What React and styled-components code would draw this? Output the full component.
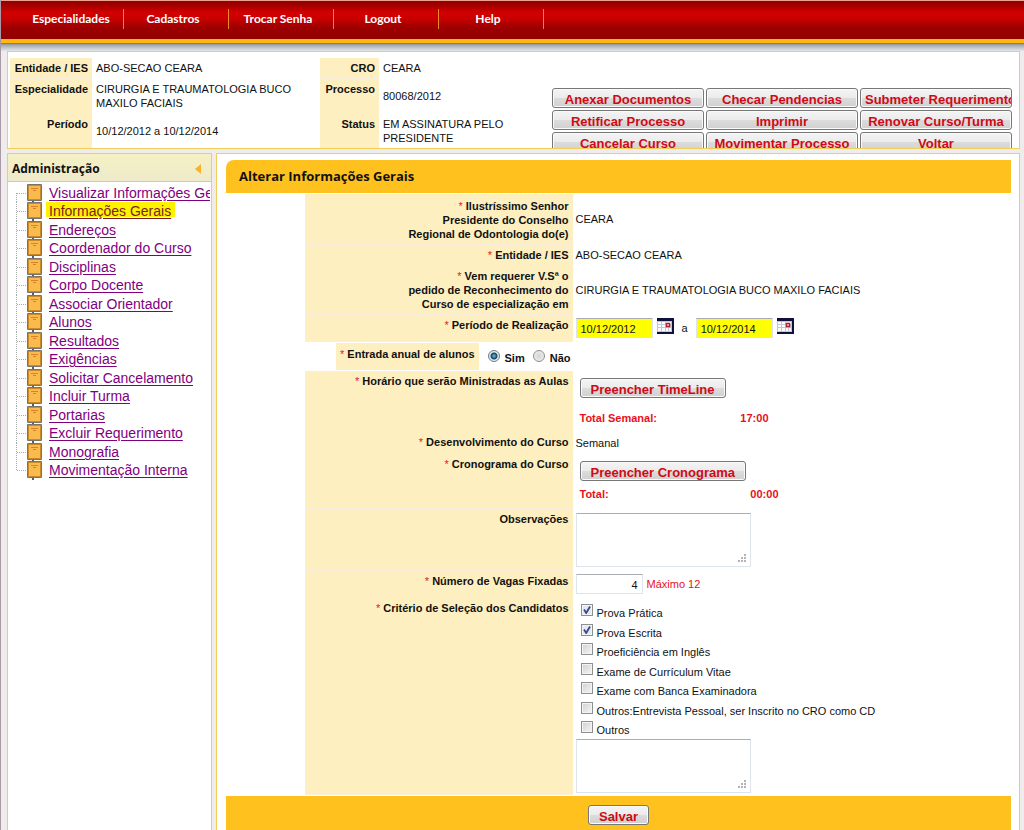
import React, { useState } from "react"
import styled, { createGlobalStyle, css } from "styled-components"

const GlobalStyle = createGlobalStyle`
  * {
    box-sizing: border-box;
  }
  body {
    margin: 0;
    background: #f0ecec;
    color: #111;
    font: 11px/14px "Liberation Sans", Arial, sans-serif;
    overflow: hidden;
  }
`

const SPage = styled.div`
  display: flex;
  flex-direction: column;
  height: 100vh;
  border-left: 1px solid #a99aa8;
`

const STopBar = styled.nav`
  flex: none;
  height: 51px;
  border-top: 1px solid #f0a090;
  background: linear-gradient(
    #8c0000 0,
    #d40000 12px,
    #c80000 18px,
    #9c0000 27px,
    #940000 38px,
    #fdb813 38px,
    #fdb813 42px,
    #77716f 42px,
    #a5a8ae 44px,
    #e4e6ea 50px
  );
`

const SMenu = styled.ul`
  display: flex;
  margin: 0;
  padding: 8px 0 0 18px;
  list-style: none;
`

const SMenuItem = styled.li`
  width: 105px;
  padding-right: 6px;
  border-right: 1px solid #f08a1c;
  &:first-child {
    padding-right: 0;
  }
  a {
    display: block;
    color: #fff;
    font: bold 12px/20px Lato, "Trebuchet MS", sans-serif;
    text-align: center;
    text-decoration: none;
  }
`

const panel = css`
  border: 1px solid #f0cf5a;
  background: #fff;
`

const SSummary = styled.section`
  ${panel}
  display: flex;
  justify-content: space-between;
  flex: none;
  height: 98px;
  margin: 0 4px 4px 6px;
  padding: 6px 7px 0 2px;
  overflow: hidden;
`

const SInfoTable = styled.table`
  flex: none;
  width: 540px;
  height: 91px;
  border-collapse: collapse;
  table-layout: fixed;
  th,
  td {
    padding: 3px 4px;
    text-align: left;
  }
  th {
    border-bottom: 1px solid #fbeedb;
    background: #feefc0;
    text-align: right;
    vertical-align: top;
    white-space: nowrap;
  }
`

const SActions = styled.div`
  display: grid;
  grid-template-columns: repeat(3, 152px);
  gap: 2px;
  align-content: start;
  padding-top: 30px;
`

const SButton = styled.button`
  height: 20px;
  padding: 0 ${p => (p.$wide ? "10px" : "4px")};
  overflow: hidden;
  border: 1px solid #777;
  border-radius: 3px;
  background: linear-gradient(#f4f4f4, #ebebeb 50%, #dcdcdc 52%, #d0d0d0);
  box-shadow: inset 0 0 0 1px #fafafa;
  color: #d00a14;
  font: bold 13px/22px "Liberation Sans", Arial, sans-serif;
  white-space: nowrap;
  cursor: pointer;
`

const SBody = styled.div`
  display: flex;
  flex: 1;
  gap: 4px;
  min-height: 0;
  margin: 0 4px 0 6px;
`

const SSidebar = styled.aside`
  ${panel}
  flex: none;
  width: 205px;
  border-bottom: 0;
  overflow: hidden;
`

const SSidebarTitle = styled.header`
  display: flex;
  align-items: center;
  justify-content: space-between;
  height: 28px;
  padding: 2px 9px 0 4px;
  border-bottom: 1px solid #f5c860;
  background: linear-gradient(#f5f1c4, #eeeacb);
  h2 {
    margin: 0;
    font: bold 12px/20px "Open Sans", Tahoma, sans-serif;
  }
  button {
    display: flex;
    padding: 0;
    border: 0;
    background: none;
  }
`

const STree = styled.ul`
  margin: 0 1px 0 0;
  padding: 2px 0 4px 8px;
  overflow: hidden;
  list-style: none;
`

const STreeItem = styled.li`
  display: flex;
  height: 18px;
  &:nth-child(even) {
    height: 19px;
  }
  svg {
    flex: none;
    overflow: visible;
  }
  a {
    margin-left: 3px;
    padding: 0 4px 0 3px;
    color: #800080;
    font-size: 14px;
    line-height: 18px;
    text-underline-offset: 2px;
    white-space: nowrap;
    ${p =>
      p.$active &&
      css`
        background: linear-gradient(#fff200 15px, transparent 15px);
        color: #7d1c1c;
      `}
  }
`

const SMain = styled.main`
  ${panel}
  flex: 1;
  display: flex;
  flex-direction: column;
  min-width: 0;
  padding: 6px 8px 0 9px;
  border-bottom: 0;
  overflow: hidden;
`

const STitle = styled.h1`
  flex: none;
  margin: 0;
  padding: 0 13px;
  border-radius: 8px 0 0 0;
  background: #ffc11e;
  font: bold 13px/33px "Open Sans", Tahoma, sans-serif;
`

const SForm = styled.form`
  display: flex;
  flex-direction: column;
  flex: 1;
`

const SFormTable = styled.table`
  width: 90%;
  margin: 1px 0 1px auto;
  border-collapse: collapse;
  table-layout: fixed;
`

const SRow = styled.tr`
  height: ${p => p.$height}px;
`

const SLabelCell = styled.th`
  width: 268px;
  padding: 3px 4px;
  border-bottom: 1px solid #fbeddd;
  background: #feefc0;
  text-align: right;
  vertical-align: top;
  tr:first-child > & {
    padding-top: 5px;
  }
`

const SValueCell = styled.td`
  padding: 0 3px;
  vertical-align: ${p => p.$align || "middle"};
`

const SRequired = styled.span`
  color: #e02020;
  font-weight: normal;
`

const SSplitCell = styled.td`
  padding: 0;
  fieldset {
    display: flex;
    justify-content: flex-end;
    margin: 0;
    padding: 0;
    border: 0;
    font-weight: bold;
  }
`

const SSplitLabel = styled.span`
  height: 27px;
  padding: 4px;
  background: #feefc0;
`

const SRadios = styled.span`
  display: flex;
  align-items: center;
  gap: 5px;
  width: 94px;
  padding: 0 2px 0 9px;
  label {
    padding-top: 4px;
  }
  label + input {
    margin-left: 3px;
  }
`

const SRadio = styled.input.attrs({ type: "radio" })`
  appearance: none;
  flex: none;
  width: 12px;
  height: 12px;
  margin: 0;
  border: 1px solid #8e8f8f;
  border-radius: 50%;
  background: radial-gradient(#d4d4d4, #f4f4f4);
  &:checked {
    border-color: #6a7a88;
    background: radial-gradient(#63c5e8 0, #16425f 3px, #e8eef2 4px);
  }
`

const SInline = styled.div`
  display: flex;
  align-items: center;
`

const STextInput = styled.input`
  width: ${p => p.$width}px;
  height: 20px;
  padding: 2px 4px 0;
  border: 1px solid #dde4ee;
  border-top-color: #abadb3;
  background: ${p => (p.$marked ? "#ffff00" : "#fff")};
  color: #111;
  font: inherit;
  text-align: ${p => (p.$marked ? "left" : "right")};
`

const SIconButton = styled.button`
  display: flex;
  margin: 0 3px 4px 4px;
  padding: 0;
  border: 0;
  background: none;
`

const SUntil = styled.span`
  margin: 0 8px 0 5px;
`

const SStack = styled.div`
  display: flex;
  flex-direction: column;
  align-items: flex-start;
  gap: ${p => p.$gap}px;
  padding: 7px 4px 0;
`

const STotal = styled.div`
  display: flex;
  justify-content: space-between;
  width: ${p => p.$width}px;
  color: #e8101c;
  font-weight: bold;
`

const STextArea = styled.textarea`
  display: block;
  width: 175px;
  height: 54px;
  border: 1px solid #dde4ee;
  border-top-color: #abadb3;
  background: #fff;
  font: inherit;
  resize: both;
  &::-webkit-resizer {
    background: url("data:image/svg+xml,%3Csvg xmlns='http://www.w3.org/2000/svg' width='15' height='15' fill='%23b4b4b4'%3E%3Cpath d='M9 3h2v2H9zM9 6h2v2H9zM9 9h2v2H9zM6 6h2v2H6zM6 9h2v2H6zM3 9h2v2H3z'/%3E%3C/svg%3E")
      no-repeat;
  }
`

const SHint = styled.span`
  margin-left: 4px;
  color: #e8101c;
`

const SCriteria = styled.ul`
  margin: 0;
  padding: 6px 5px 0;
  list-style: none;
`

const SCriterion = styled.li`
  display: flex;
  gap: 4px;
  height: 20px;
  &:nth-child(even) {
    height: 19px;
  }
  &:last-child {
    height: 18px;
  }
  label {
    padding-top: 2px;
  }
`

const SCheckbox = styled.input.attrs({ type: "checkbox" })`
  appearance: none;
  flex: none;
  width: 12px;
  height: 12px;
  margin: 0;
  border: 1px solid #8e8f8f;
  background: linear-gradient(135deg, #cfd0d2, #f6f6f6);
  box-shadow: inset 0 0 0 1px #f4f4f4;
  &:checked {
    background: url("data:image/svg+xml,%3Csvg xmlns='http://www.w3.org/2000/svg' viewBox='0 0 10 10'%3E%3Cpath d='M2 4.5 4.2 8 8 1.5' fill='none' stroke='%23354a90' stroke-width='1.8'/%3E%3C/svg%3E")
      #e4e8f0;
  }
`

const SFooter = styled.footer`
  flex: 1;
  padding-top: 9px;
  background: #ffc11e;
  text-align: center;
`

const menu = ["Especialidades", "Cadastros", "Trocar Senha", "Logout", "Help"]

const actions = [
  "Anexar Documentos",
  "Checar Pendencias",
  "Submeter Requerimento",
  "Retificar Processo",
  "Imprimir",
  "Renovar Curso/Turma",
  "Cancelar Curso",
  "Movimentar Processo",
  "Voltar",
]

const tree = [
  "Visualizar Informações Gerais",
  "Informações Gerais",
  "Endereços",
  "Coordenador do Curso",
  "Disciplinas",
  "Corpo Docente",
  "Associar Orientador",
  "Alunos",
  "Resultados",
  "Exigências",
  "Solicitar Cancelamento",
  "Incluir Turma",
  "Portarias",
  "Excluir Requerimento",
  "Monografia",
  "Movimentação Interna",
]

const criteria = [
  "Prova Prática",
  "Prova Escrita",
  "Proeficiência em Inglês",
  "Exame de Currículum Vitae",
  "Exame com Banca Examinadora",
  "Outros:Entrevista Pessoal, ser Inscrito no CRO como CD",
  "Outros",
]

function BookIcon({ first, last }) {
  return (
    <svg width="27" height="19" viewBox="0 0 27 19" aria-hidden="true">
      <path
        d={`M.5 ${first ? 9 : 0}V${last ? 9 : 19}M1 9.5h9`}
        stroke="#a8a8a8"
        strokeDasharray="1 1"
        fill="none"
      />
      <path d="M17 17v2" stroke="#56606c" strokeWidth="2" />
      <rect x="11" y="0" width="15" height="17" rx="1" fill="#77746e" />
      <rect x="12" y="1" width="13" height="15" fill="#c98a2c" />
      <rect x="13" y="2" width="11" height="13" fill="#fbbb4c" />
      <path d="M15 4.5h7M17 6.5h3" stroke="#d8812c" />
    </svg>
  )
}

function CalendarIcon() {
  return (
    <svg width="17" height="16" viewBox="0 0 17 16" aria-hidden="true">
      <path d="M0 0h17v16H0z" fill="#10103c" />
      <path d="M0 3h15v11H0z" fill="#c4c8d4" />
      <path
        d="M1 4h3v2H1zM5 4h3v2H5zM9 4h5v2H9zM1 7h3v2H1zM5 7h3v2H5zM1 10h3v3H1zM5 10h3v3H5zM9 10h2v3H9zM12 10h2v3h-2z"
        fill="#fff"
      />
      <path d="M9.5 5.5h3v3h-3z" fill="#fff" stroke="#b02030" strokeWidth="1.5" />
    </svg>
  )
}

function Label({ children, optional, htmlFor }) {
  return (
    <SLabelCell scope="row">
      {!optional && <SRequired>* </SRequired>}
      <label htmlFor={htmlFor}>{children}</label>
    </SLabelCell>
  )
}

function DateField({ id, label, value }) {
  return (
    <>
      <STextInput id={id} aria-label={label} defaultValue={value} $width={77} $marked />
      <SIconButton type="button" aria-label={label}>
        <CalendarIcon />
      </SIconButton>
    </>
  )
}

function Summary() {
  return (
    <SSummary>
      <SInfoTable>
        <colgroup>
          <col style={{ width: 82 }} />
          <col style={{ width: 228 }} />
          <col style={{ width: 59 }} />
          <col />
        </colgroup>
        <tbody>
          <tr>
            <th scope="row">Entidade / IES</th>
            <td>ABO-SECAO CEARA</td>
            <th scope="row">CRO</th>
            <td>CEARA</td>
          </tr>
          <tr>
            <th scope="row">Especialidade</th>
            <td>
              CIRURGIA E TRAUMATOLOGIA BUCO
              <br />
              MAXILO FACIAIS
            </td>
            <th scope="row">Processo</th>
            <td>80068/2012</td>
          </tr>
          <tr>
            <th scope="row">Período</th>
            <td>10/12/2012 a 10/12/2014</td>
            <th scope="row">Status</th>
            <td>
              EM ASSINATURA PELO
              <br />
              PRESIDENTE
            </td>
          </tr>
        </tbody>
      </SInfoTable>
      <SActions>
        {actions.map(action => (
          <SButton type="button" key={action}>
            {action}
          </SButton>
        ))}
      </SActions>
    </SSummary>
  )
}

function Sidebar() {
  return (
    <SSidebar>
      <SSidebarTitle>
        <h2>Administração</h2>
        <button type="button" aria-label="Recolher">
          <svg width="7" height="10" viewBox="0 0 7 10">
            <path d="M0 5 6 0v10z" fill="#fdb02a" />
          </svg>
        </button>
      </SSidebarTitle>
      <STree>
        {tree.map((item, i) => (
          <STreeItem key={item} $active={i === 1}>
            <BookIcon first={i === 0} last={i === tree.length - 1} />
            <a href="#">{item}</a>
          </STreeItem>
        ))}
      </STree>
    </SSidebar>
  )
}

function CourseForm() {
  const [annual, setAnnual] = useState("sim")
  return (
    <SForm>
      <SFormTable>
        <tbody>
          <SRow $height={50}>
            <Label>
              Ilustríssimo Senhor
              <br />
              Presidente do Conselho
              <br />
              Regional de Odontologia do(e)
            </Label>
            <SValueCell>CEARA</SValueCell>
          </SRow>
          <SRow $height={21}>
            <Label>Entidade / IES</Label>
            <SValueCell>ABO-SECAO CEARA</SValueCell>
          </SRow>
          <SRow $height={49}>
            <Label>
              Vem requerer V.Sª o
              <br />
              pedido de Reconhecimento do
              <br />
              Curso de especialização em
            </Label>
            <SValueCell>CIRURGIA E TRAUMATOLOGIA BUCO MAXILO FACIAIS</SValueCell>
          </SRow>
          <SRow $height={27}>
            <Label htmlFor="inicio">Período de Realização</Label>
            <SValueCell>
              <SInline>
                <DateField id="inicio" label="Início" value="10/12/2012" />
                <SUntil>a</SUntil>
                <DateField id="fim" label="Fim" value="10/12/2014" />
              </SInline>
            </SValueCell>
          </SRow>
          <SRow $height={29}>
            <SSplitCell>
              <fieldset>
                <SSplitLabel id="anual">
                  <SRequired>* </SRequired>Entrada anual de alunos
                </SSplitLabel>
                <SRadios role="radiogroup" aria-labelledby="anual">
                  <SRadio
                    id="sim"
                    name="anual"
                    checked={annual === "sim"}
                    onChange={() => setAnnual("sim")}
                  />
                  <label htmlFor="sim">Sim</label>
                  <SRadio
                    id="nao"
                    name="anual"
                    checked={annual === "nao"}
                    onChange={() => setAnnual("nao")}
                  />
                  <label htmlFor="nao">Não</label>
                </SRadios>
              </fieldset>
            </SSplitCell>
            <SValueCell />
          </SRow>
          <SRow $height={61}>
            <Label>Horário que serão Ministradas as Aulas</Label>
            <SValueCell $align="top">
              <SStack $gap={13}>
                <SButton type="button" $wide>
                  Preencher TimeLine
                </SButton>
                <STotal $width={189}>
                  <span>Total Semanal:</span>
                  <span>17:00</span>
                </STotal>
              </SStack>
            </SValueCell>
          </SRow>
          <SRow $height={22}>
            <Label>Desenvolvimento do Curso</Label>
            <SValueCell>Semanal</SValueCell>
          </SRow>
          <SRow $height={55}>
            <Label>Cronograma do Curso</Label>
            <SValueCell $align="top">
              <SStack $gap={6}>
                <SButton type="button" $wide>
                  Preencher Cronograma
                </SButton>
                <STotal $width={199}>
                  <span>Total:</span>
                  <span>00:00</span>
                </STotal>
              </SStack>
            </SValueCell>
          </SRow>
          <SRow $height={62}>
            <Label optional htmlFor="observacoes">
              Observações
            </Label>
            <SValueCell>
              <STextArea id="observacoes" />
            </SValueCell>
          </SRow>
          <SRow $height={27}>
            <Label htmlFor="vagas">Número de Vagas Fixadas</Label>
            <SValueCell>
              <SInline>
                <STextInput id="vagas" defaultValue="4" $width={67} />
                <SHint>Máximo 12</SHint>
              </SInline>
            </SValueCell>
          </SRow>
          <SRow $height={197}>
            <Label>Critério de Seleção dos Candidatos</Label>
            <SValueCell $align="top">
              <SCriteria>
                {criteria.map((item, i) => (
                  <SCriterion key={item}>
                    <SCheckbox id={`criterio-${i}`} defaultChecked={i < 2} />
                    <label htmlFor={`criterio-${i}`}>{item}</label>
                  </SCriterion>
                ))}
              </SCriteria>
              <STextArea aria-label="Outros critérios" />
            </SValueCell>
          </SRow>
        </tbody>
      </SFormTable>
      <SFooter>
        <SButton type="button" $wide>
          Salvar
        </SButton>
      </SFooter>
    </SForm>
  )
}

export default function App() {
  return (
    <SPage>
      <GlobalStyle />
      <STopBar>
        <SMenu>
          {menu.map(item => (
            <SMenuItem key={item}>
              <a href="#">{item}</a>
            </SMenuItem>
          ))}
        </SMenu>
      </STopBar>
      <Summary />
      <SBody>
        <Sidebar />
        <SMain>
          <STitle>Alterar Informações Gerais</STitle>
          <CourseForm />
        </SMain>
      </SBody>
    </SPage>
  )
}
